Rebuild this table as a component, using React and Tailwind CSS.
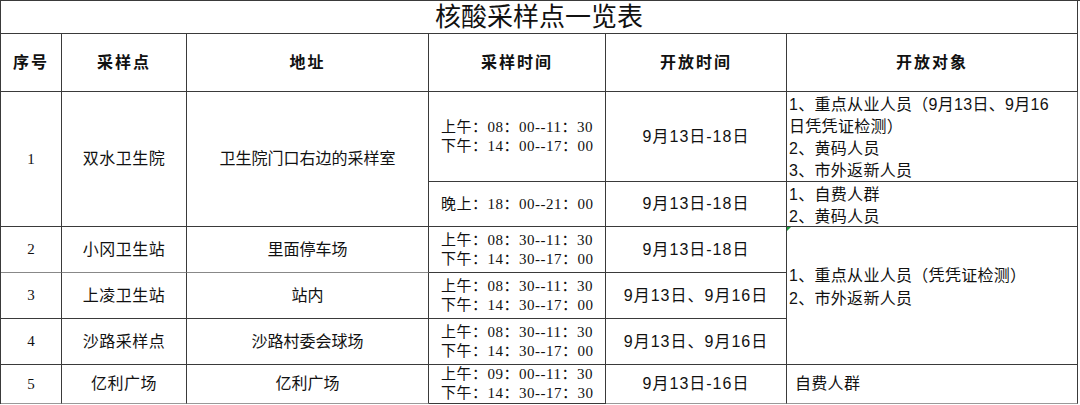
import React from "react";

const serif = { fontFamily: '"Liberation Serif", "Noto Sans CJK SC", serif' };
const sans = { fontFamily: '"Liberation Sans", "Noto Sans CJK SC", sans-serif' };

const C = "border-r border-b border-[#3a3a3a] flex items-center justify-center text-[#111]";

function Time({ lines }) {
  return (
    <div className={C + " justify-start pl-[12px] text-[15px] tracking-[0.5px] leading-[19px]"} style={serif}>
      <div>
        {lines.map((l, i) => (
          <div key={i}>{l}</div>
        ))}
      </div>
    </div>
  );
}

const D = " text-[16px] tracking-[1px]";

export default function App() {
  return (
    <div className="w-[1080px] h-[405px] bg-white overflow-hidden">
      <div
        className="grid border-t border-l border-[#3a3a3a] grid-cols-[61px_125px_242px_177px_181px_291px] grid-rows-[33px_58px_90px_45px_46px_46px_46px_39px]"
        style={serif}
      >
        <div className={C + " col-span-6 text-[26px] pt-[1px]"} style={serif}>
          核酸采样点一览表
        </div>

        {["序号", "采样点", "地址", "采样时间", "开放时间", "开放对象"].map((h) => (
          <div key={h} className={C + " font-bold text-[16px] tracking-[2px]"} style={sans}>
            {h}
          </div>
        ))}

        <div className={C + " row-span-2 text-[15px]"}>1</div>
        <div className={C + " row-span-2 text-[16px] tracking-[0.5px]"}>双水卫生院</div>
        <div className={C + " row-span-2 text-[16px]"}>卫生院门口右边的采样室</div>
        <Time lines={["上午：08：00--11：30", "下午：14：00--17：00"]} />
        <div className={C + D} style={sans}>9月13日-18日</div>
        <div className={C + " justify-start items-start pl-[2px] text-[16px] tracking-[0.3px] leading-[22px] pt-[2px] border-r-[#555]"} style={sans}>
          <div>
            <div>1、重点从业人员（9月13日、9月16</div>
            <div>日凭凭证检测）</div>
            <div>2、黄码人员</div>
            <div>3、市外返新人员</div>
          </div>
        </div>
        <Time lines={["晚上：18：00--21：00"]} />
        <div className={C + D} style={sans}>9月13日-18日</div>
        <div className={C + " justify-start pl-[2px] pt-[3px] text-[16px] tracking-[0.3px] leading-[22px]"} style={sans}>
          <div>
            <div>1、自费人群</div>
            <div>2、黄码人员</div>
          </div>
        </div>

        <div className={C + " text-[15px]"}>2</div>
        <div className={C + " text-[16px] tracking-[0.5px]"}>小冈卫生站</div>
        <div className={C + " text-[16px]"}>里面停车场</div>
        <Time lines={["上午：08：30--11：30", "下午：14：30--17：00"]} />
        <div className={C + D} style={sans}>9月13日-18日</div>
        <div className={C + " row-span-3 justify-start pl-[2px] pb-[18px] text-[16px] tracking-[0.3px] leading-[23px] relative"} style={sans}>
          <span className="absolute left-0 top-0 w-0 h-0 border-t-[4px] border-r-[4px] border-t-[#1a9c3a] border-r-transparent"></span>
          <div>
            <div>1、重点从业人员（凭凭证检测）</div>
            <div>2、市外返新人员</div>
          </div>
        </div>

        <div className={C + " text-[15px] border-t border-t-[#888] -mt-px"}>3</div>
        <div className={C + " text-[16px] tracking-[0.5px] border-t border-t-[#888] -mt-px"}>上凌卫生站</div>
        <div className={C + " text-[16px] border-t border-t-[#888] -mt-px"}>站内</div>
        <Time lines={["上午：08：30--11：30", "下午：14：30--17：00"]} />
        <div className={C + D} style={sans}>9月13日、9月16日</div>

        <div className={C + " text-[15px]"}>4</div>
        <div className={C + " text-[16px] tracking-[0.5px]"}>沙路采样点</div>
        <div className={C + " text-[16px]"}>沙路村委会球场</div>
        <Time lines={["上午：08：30--11：30", "下午：14：30--17：00"]} />
        <div className={C + D} style={sans}>9月13日、9月16日</div>

        <div className={C + " text-[15px] border-b-[#999]"}>5</div>
        <div className={C + " text-[16px] tracking-[0.5px] border-b-[#999]"}>亿利广场</div>
        <div className={C + " text-[16px] border-b-[#999]"}>亿利广场</div>
        <Time lines={["上午：09：00--11：30", "下午：14：30--17：30"]} />
        <div className={C + D + " border-b-[#999]"} style={sans}>9月13日-16日</div>
        <div className={C + " justify-start pl-[8px] text-[16px] tracking-[0.3px] border-b-[#999]"} style={sans}>自费人群</div>
      </div>
    </div>
  );
}
